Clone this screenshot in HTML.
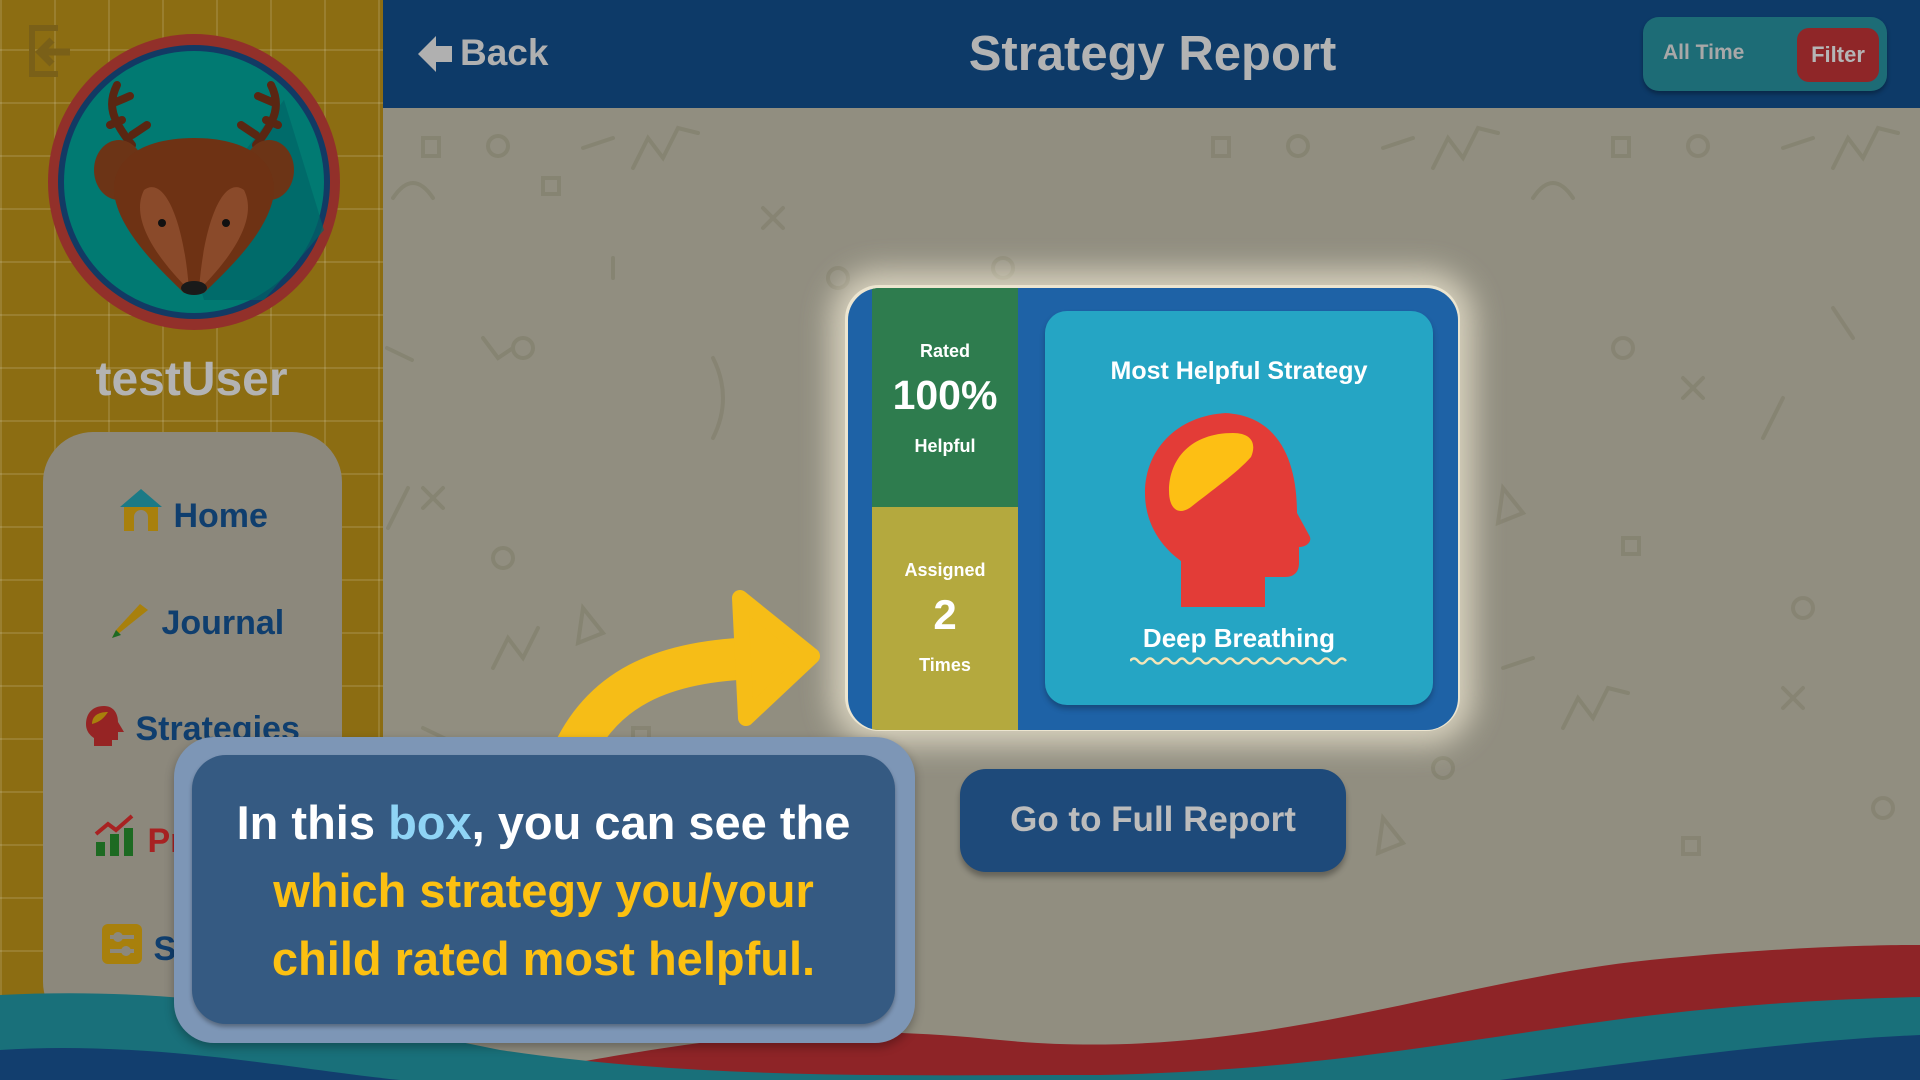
<!DOCTYPE html>
<html style="overflow:hidden;width:1920px;height:1080px"><head><meta charset="utf-8"><style>
*{margin:0;padding:0;box-sizing:border-box}
body{width:1920px;height:1080px;overflow:hidden;position:relative;background:#918e80;font-family:"Liberation Sans","DejaVu Sans",sans-serif;font-weight:bold}
.abs{position:absolute}
#side{left:0;top:0;width:383px;height:1080px;background:#8c6d12;
background-image:linear-gradient(rgba(255,255,255,.12) 2px,transparent 2px),linear-gradient(90deg,rgba(255,255,255,.12) 2px,transparent 2px);background-size:54px 53px;background-position:0 -4px}
#hdr{left:383px;top:0;width:1537px;height:108px;background:#0d3a68}
.t{color:#bdbdbd}
</style></head><body>
<svg class="abs" style="left:383px;top:108px" width="1537" height="972">
<g fill="none" stroke="#84826f" stroke-width="4" stroke-linecap="round" opacity=".8">
<rect x="40" y="30" width="16" height="18"/><circle cx="115" cy="38" r="10"/><path d="M200 40l30-10"/><path d="M250 60l15-30 15 20 15-30 20 5"/>
<circle cx="455" cy="170" r="10"/><path d="M10 90q20-30 40 0"/><path d="M230 170v-20"/><rect x="160" y="70" width="16" height="16"/>
<path d="M4 240l25 12"/><path d="M100 230l15 20 15-10"/><path d="M5 420l20-40"/><circle cx="140" cy="240" r="10"/>
<rect x="830" y="30" width="16" height="18"/><circle cx="915" cy="38" r="10"/><path d="M1000 40l30-10"/><path d="M1050 60l15-30 15 20 15-30 20 5"/>
<rect x="1230" y="30" width="16" height="18"/><circle cx="1315" cy="38" r="10"/><path d="M1400 40l30-10"/><path d="M1450 60l15-30 15 20 15-30 20 5"/>
<path d="M1150 90q20-30 40 0"/><path d="M1450 200l20 30"/><circle cx="1240" cy="240" r="10"/><path d="M1300 270l20 20m0-20l-20 20"/>
<path d="M1120 380l20 25-25 10z"/><rect x="1240" y="430" width="16" height="16"/><path d="M1380 330l20-40"/><circle cx="1420" cy="500" r="10"/>
<path d="M1120 560l30-10"/><path d="M1180 620l15-30 15 20 15-30 20 5"/><circle cx="1060" cy="660" r="10"/><path d="M1400 580l20 20m0-20l-20 20"/>
<path d="M1000 710l20 25-25 10z"/><rect x="1300" y="730" width="16" height="16"/><circle cx="1500" cy="700" r="10"/>
<path d="M40 380l20 20m0-20l-20 20"/><circle cx="120" cy="450" r="10"/><path d="M110 560l15-30 15 20 15-30"/><path d="M200 500l20 25-25 10z"/>
<path d="M40 620l25 12"/><circle cx="100" cy="660" r="10"/><rect x="250" y="620" width="16" height="16"/><path d="M500 300l20 25-25 10z"/>
<path d="M330 250q20 40 0 80"/><path d="M380 100l20 20m0-20l-20 20"/><circle cx="620" cy="160" r="10"/><path d="M600 330l15-30 15 20"/>
</g></svg>
<div class="abs" id="side"></div>
<svg class="abs" style="left:26px;top:24px" width="60" height="56"><path d="M32 4H6v46h26" fill="none" stroke="#7a6018" stroke-width="6"/><path d="M14 28h30M26 16l-12 12 12 12" fill="none" stroke="#7a6018" stroke-width="7"/></svg>
<svg class="abs" style="left:44px;top:30px" width="300" height="305">
<ellipse cx="150" cy="152" rx="146" ry="148" fill="#92302a"/>
<ellipse cx="150" cy="152" rx="136" ry="137" fill="#123a64"/>
<ellipse cx="150" cy="152" rx="130" ry="131" fill="#017a72"/>
<path d="M240 70L280 200 220 270 160 270 140 200z" fill="#006566" opacity=".7"/>
<g stroke="#5a2612" stroke-width="8" fill="none" stroke-linecap="round"><path d="M88 115c-20-25-25-40-15-60M78 90l-12 5M72 72l14-6M88 105l15-10"/><path d="M212 115c20-25 25-40 15-60M222 90l12 5M228 72l-14-6M212 105l-15-10"/></g>
<ellipse cx="75" cy="140" rx="25" ry="30" fill="#6c3416"/><ellipse cx="225" cy="140" rx="25" ry="30" fill="#6c3416"/>
<path d="M150 108c-50 0-82 20-80 55 5 40 50 80 70 100h20c20-20 65-60 70-100 2-35-30-55-80-55z" fill="#6e3214"/>
<path d="M100 160c20-15 40 30 45 100-30-30-60-70-45-100zM200 160c-20-15-40 30-45 100 30-30 60-70 45-100z" fill="#8a4a2a"/>
<circle cx="118" cy="193" r="4" fill="#111"/><circle cx="182" cy="193" r="4" fill="#111"/><ellipse cx="150" cy="258" rx="13" ry="7" fill="#1a1a1a"/>
</svg>
<div class="abs t" style="left:0;width:383px;top:352px;text-align:center;font-size:48px;color:#b3b3b3">testUser</div>
<div class="abs" style="left:43px;top:432px;width:299px;height:600px;background:#8c887c;border-radius:50px"></div>
<div class="abs" style="top:487px;left:118px;font-size:34px;color:#0f3e6e">
<svg width="46" height="46" style="vertical-align:-6px"><path d="M2 20L23 2 44 20z" fill="#1b7a86"/><path d="M6 20h34v24h-10V30a7 7 0 0 0-14 0v14H6z" fill="#a8800c"/></svg> Home</div>
<div class="abs" style="top:596px;left:108px;font-size:34px;color:#0f3e6e">
<svg width="44" height="44" style="vertical-align:-6px"><path d="M10 38l-6 4 4-8 24-26 8 6z" fill="#a8800c"/><path d="M4 42l4-8 5 5z" fill="#1d6a22"/></svg> Journal</div>
<div class="abs" style="top:704px;left:84px;font-size:34px;color:#0f3e6e">
<svg width="42" height="44" style="vertical-align:-8px"><path d="M20 2C8 2 2 10 2 20c0 8 5 12 8 14v8h18v-6h6v-8h6l-6-10C34 10 30 2 20 2z" fill="#962424"/><path d="M8 20c0-8 6-12 16-12-4 6-8 10-16 12z" fill="#a8800c"/></svg> Strategies</div>
<div class="abs" style="top:814px;left:94px;font-size:34px;color:#a82222">
<svg width="44" height="44" style="vertical-align:-6px"><rect x="2" y="28" width="9" height="14" fill="#1d6a22"/><rect x="16" y="20" width="9" height="22" fill="#1d6a22"/><rect x="30" y="14" width="9" height="28" fill="#1d6a22"/><path d="M2 20l12-10 8 6 16-14" stroke="#a82222" stroke-width="4" fill="none"/></svg> Pr</div>
<div class="abs" style="top:922px;left:100px;font-size:34px;color:#0f3e6e">
<svg width="44" height="44" style="vertical-align:-6px"><rect x="2" y="2" width="40" height="40" rx="6" fill="#a8800c"/><path d="M10 15h24M10 29h24" stroke="#8c887c" stroke-width="4"/><circle cx="18" cy="15" r="5" fill="#8c887c"/><circle cx="26" cy="29" r="5" fill="#8c887c"/></svg> S</div>
<div class="abs" id="hdr"></div>
<svg class="abs" style="left:416px;top:34px" width="40" height="40"><path d="M2 20L20 2v10h16v16H20v10z" fill="#b0b0b0"/></svg>
<div class="abs t" style="left:460px;top:32px;font-size:37px;color:#b0b0b0">Back</div>
<div class="abs t" style="left:700px;width:905px;text-align:center;top:26px;font-size:49px;color:#b3b3b3">Strategy Report</div>
<div class="abs" style="left:1643px;top:17px;width:244px;height:74px;background:#1d6c76;border-radius:16px;box-shadow:0 3px 4px rgba(0,0,0,.3)"></div>
<div class="abs" style="left:1663px;top:41px;font-size:21px;color:#a8a8a8">All Time</div>
<div class="abs" style="left:1797px;top:28px;width:82px;height:54px;background:#8f2628;border-radius:12px;color:#b5b5b5;font-size:22px;text-align:center;line-height:54px">Filter</div>
<svg class="abs" style="left:0;top:0" width="1920" height="1080">
<path d="M480 1080C700 1040 800 1020 1000 1040C1250 1065 1450 980 1650 960C1800 945 1900 945 1920 945V1080z" fill="#8e2427"/>
<path d="M0 995C200 985 350 1020 500 1050C700 1080 900 1075 1100 1075C1350 1070 1500 1030 1700 1010C1800 1000 1880 998 1920 997V1080H0z" fill="#19707a"/>
<path d="M0 1050C150 1040 300 1070 400 1080H0z" fill="#123e6e"/>
<path d="M1500 1080C1650 1060 1800 1040 1920 1035V1080z" fill="#123e6e"/>
</svg>
<div class="abs" style="left:845px;top:285px;width:615px;height:446px;border-radius:34px;background:#ece5d0;box-shadow:0 0 30px 14px rgba(245,238,215,.7)"></div>
<div class="abs" style="left:848px;top:288px;width:610px;height:442px;border-radius:32px;background:#1e62a6;overflow:hidden">
 <div class="abs" style="left:24px;top:0;width:146px;height:219px;background:#2e7c4e"></div>
 <div class="abs" style="left:24px;top:219px;width:146px;height:223px;background:#b4a93e"></div>
 <div class="abs" style="left:24px;top:53px;width:146px;text-align:center;color:#fff;font-size:18px">Rated</div>
 <div class="abs" style="left:24px;top:84px;width:146px;text-align:center;color:#fff;font-size:41px">100%</div>
 <div class="abs" style="left:24px;top:148px;width:146px;text-align:center;color:#fff;font-size:18px">Helpful</div>
 <div class="abs" style="left:24px;top:272px;width:146px;text-align:center;color:#fff;font-size:18px">Assigned</div>
 <div class="abs" style="left:24px;top:303px;width:146px;text-align:center;color:#fff;font-size:42px">2</div>
 <div class="abs" style="left:24px;top:367px;width:146px;text-align:center;color:#fff;font-size:18px">Times</div>
 <div class="abs" style="left:197px;top:23px;width:388px;height:394px;border-radius:22px;background:#25a5c4;box-shadow:0 4px 6px rgba(0,0,0,.25)">
  <div class="abs" style="left:0;width:388px;top:46px;text-align:center;color:#fff;font-size:25px">Most Helpful Strategy</div>
  <svg class="abs" style="left:96px;top:100px" width="200" height="200"><path d="M90 2C40 2 4 36 4 82c0 36 22 58 36 68v46h84v-30h20c10 0 14-6 14-14v-16c8 0 14-6 10-12l-12-22c0-60-24-100-76-100z" fill="#e33c37"/><path d="M28 80c0-32 22-58 64-58 18 0 24 10 18 24C96 62 70 80 50 96 36 106 28 96 28 80z" fill="#fdbf14"/></svg>
  <div class="abs" style="left:0;width:388px;top:312px;text-align:center;color:#fff;font-size:26px">Deep Breathing</div>
  <svg class="abs" style="left:85px;top:345px" width="220" height="10"><path d="M0 5q4-5 8 0t8 0 8 0 8 0 8 0 8 0 8 0 8 0 8 0 8 0 8 0 8 0 8 0 8 0 8 0 8 0 8 0 8 0 8 0 8 0 8 0 8 0 8 0 8 0 8 0 8 0 8 0" fill="none" stroke="#f2e5b8" stroke-width="2.5"/></svg>
 </div>
</div>
<div class="abs" style="left:960px;top:769px;width:386px;height:103px;border-radius:26px;background:#1e4a7a;box-shadow:0 5px 6px rgba(0,0,0,.3)"></div>
<div class="abs" style="left:960px;width:386px;top:800px;text-align:center;font-size:35px;color:#bcbcbc">Go to Full Report</div>
<svg class="abs" style="left:540px;top:570px" width="290" height="200"><path d="M30 190C60 120 120 90 220 88" fill="none" stroke="#f6bd17" stroke-width="42"/><path d="M200 28l72 58-66 62z" fill="#f6bd17" stroke="#f6bd17" stroke-width="16" stroke-linejoin="round"/></svg>
<div class="abs" style="left:174px;top:737px;width:741px;height:306px;border-radius:40px;background:#7d96b6;box-shadow:0 4px 10px rgba(0,0,0,.3)"></div>
<div class="abs" style="left:192px;top:755px;width:703px;height:269px;border-radius:34px;background:#355a82;box-shadow:0 3px 4px rgba(0,0,0,.3)"></div>
<div class="abs" style="left:192px;width:703px;top:789px;text-align:center;font-size:47px;line-height:68px;color:#fff">In this <span style="color:#8fd4f5">box</span>, you can see the<br><span style="color:#fcc011">which strategy you/your<br>child rated most helpful.</span></div>
</body></html>
